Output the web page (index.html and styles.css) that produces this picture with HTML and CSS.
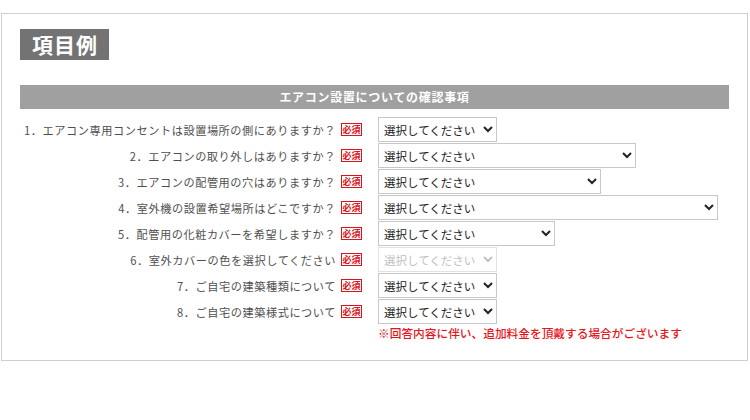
FILE: index.html
```html
<!DOCTYPE html>
<html lang="ja">
<head>
<meta charset="utf-8">
<title>項目例</title>
<link rel="stylesheet" href="styles.css">
</head>
<body>
<div class="panel">
  <div class="title">項目例</div>
  <div class="bar">エアコン設置についての確認事項</div>
  <div class="form">
    <div class="label">1．エアコン専用コンセントは設置場所の側にありますか？<span class="req">必須</span></div>
    <div class="field"><select class="sel w118"><option>選択してください</option></select></div>

    <div class="label">2．エアコンの取り外しはありますか？<span class="req">必須</span></div>
    <div class="field"><select class="sel w258"><option>選択してください</option></select></div>

    <div class="label">3．エアコンの配管用の穴はありますか？<span class="req">必須</span></div>
    <div class="field"><select class="sel w223"><option>選択してください</option></select></div>

    <div class="label">4．室外機の設置希望場所はどこですか？<span class="req">必須</span></div>
    <div class="field"><select class="sel w340"><option>選択してください</option></select></div>

    <div class="label">5．配管用の化粧カバーを希望しますか？<span class="req">必須</span></div>
    <div class="field"><select class="sel w177"><option>選択してください</option></select></div>

    <div class="label">6．室外カバーの色を選択してください<span class="req">必須</span></div>
    <div class="field"><select class="sel w118" disabled><option>選択してください</option></select></div>

    <div class="label">7．ご自宅の建築種類について<span class="req">必須</span></div>
    <div class="field"><select class="sel w118"><option>選択してください</option></select></div>

    <div class="label">8．ご自宅の建築様式について<span class="req">必須</span></div>
    <div class="field"><select class="sel w118"><option>選択してください</option></select></div>

    <div class="note">※回答内容に伴い、追加料金を頂戴する場合がございます</div>
  </div>
</div>
</body>
</html>
```

FILE: styles.css
```css
html, body {
  margin: 0;
  padding: 0;
  background: #fff;
}

body {
  font-family: "Noto Sans CJK JP", "Noto Sans", sans-serif;
  color: #555;
}

.panel {
  box-sizing: border-box;
  margin: 13px 0 0 1px;
  width: 747px;
  height: 348px;
  border: 1px solid #cfcfcf;
  padding: 15px 0 0 18px;
}

.title {
  box-sizing: border-box;
  width: 89px;
  height: 31px;
  line-height: 31px;
  padding-left: 12px;
  background: #737373;
  color: #fff;
  font-size: 21px;
  font-weight: bold;
  letter-spacing: 1px;
}

.bar {
  margin-top: 25px;
  width: 709px;
  height: 24px;
  line-height: 24px;
  background: #a0a0a0;
  color: #fff;
  font-size: 12px;
  font-weight: bold;
  letter-spacing: 0.7px;
  text-align: center;
}

.form {
  margin-top: 8px;
  display: grid;
  grid-template-columns: 342px auto;
  column-gap: 16px;
  row-gap: 1px;
}

.label {
  display: flex;
  justify-content: flex-end;
  align-items: center;
  gap: 5px;
  font-size: 11.2px;
  letter-spacing: 0.55px;
  color: #4f4f4f;
  white-space: nowrap;
}

.req {
  box-sizing: border-box;
  display: inline-flex;
  align-items: center;
  justify-content: center;
  width: 21px;
  height: 13px;
  border: 1px solid #d8141c;
  color: #d8141c;
  background: #fff;
  font-size: 9px;
  font-weight: bold;
  letter-spacing: 0;
  line-height: 1;
}

.field {
  display: flex;
  align-items: center;
}

.sel {
  box-sizing: border-box;
  height: 25px;
  border: 1px solid #c8c8c8;
  border-radius: 0;
  background-color: #fff;
  color: #222;
  font-family: "Noto Sans CJK JP", "Noto Sans", sans-serif;
  font-size: 11.5px;
  padding: 0 0 0 1px;
  margin: 0;
}

.sel:disabled {
  color: #a8a8a8;
  background-color: #fff;
  border-color: #d6d6d6;
}

.w118 { width: 119px; }
.w258 { width: 258px; }
.w223 { width: 223px; }
.w340 { width: 340px; }
.w177 { width: 177px; }

.note {
  grid-column: 2;
  margin-top: 0;
  line-height: 1.3;
  color: #e8141c;
  font-size: 11.7px;
  font-weight: 500;
  white-space: nowrap;
}
```
